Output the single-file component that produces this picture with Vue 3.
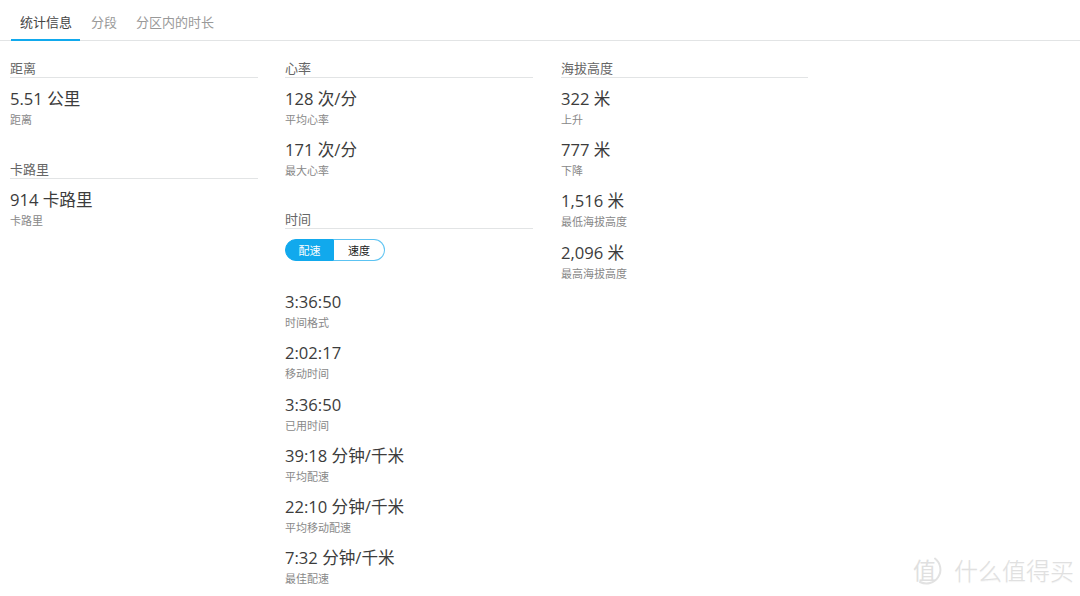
<template>
  <div class="page">
    <div class="tabs">
      <span
        v-for="(tab, i) in tabs"
        :key="tab"
        class="tab"
        :class="{ active: i === 0 }"
      >{{ tab }}</span>
    </div>

    <div class="columns">
      <div v-for="(col, c) in columns" :key="c" class="column">
        <section v-for="group in col" :key="group.title" class="group">
          <h3 class="group-title">{{ group.title }}</h3>
          <div v-if="group.toggle" class="toggle">
            <span class="toggle-item on">配速</span>
            <span class="toggle-item">速度</span>
          </div>
          <div v-for="item in group.items" :key="item.label" class="stat">
            <div class="stat-value">{{ item.value }}</div>
            <div class="stat-label">{{ item.label }}</div>
          </div>
        </section>
      </div>
    </div>

    <div class="watermark">
      <svg class="mark" width="32" height="32" viewBox="0 0 32 32" fill="none">
        <path
          d="M22 3.5A14 14 0 0 1 7 27"
          stroke="#e2e2e2"
          stroke-width="2"
          stroke-linecap="round"
        />
        <text x="0" y="24" class="mark-glyph">值</text>
      </svg>
      <span class="mark-text">什么值得买</span>
    </div>
  </div>
</template>

<script setup>
const tabs = ['统计信息', '分段', '分区内的时长']

const columns = [
  [
    { title: '距离', items: [{ value: '5.51 公里', label: '距离' }] },
    { title: '卡路里', items: [{ value: '914 卡路里', label: '卡路里' }] },
  ],
  [
    {
      title: '心率',
      items: [
        { value: '128 次/分', label: '平均心率' },
        { value: '171 次/分', label: '最大心率' },
      ],
    },
    {
      title: '时间',
      toggle: true,
      items: [
        { value: '3:36:50', label: '时间格式' },
        { value: '2:02:17', label: '移动时间' },
        { value: '3:36:50', label: '已用时间' },
        { value: '39:18 分钟/千米', label: '平均配速' },
        { value: '22:10 分钟/千米', label: '平均移动配速' },
        { value: '7:32 分钟/千米', label: '最佳配速' },
      ],
    },
  ],
  [
    {
      title: '海拔高度',
      items: [
        { value: '322 米', label: '上升' },
        { value: '777 米', label: '下降' },
        { value: '1,516 米', label: '最低海拔高度' },
        { value: '2,096 米', label: '最高海拔高度' },
      ],
    },
  ],
]
</script>

<style>
html,
body {
  margin: 0;
  background: #fff;
  overflow: hidden;
}
</style>

<style scoped>
.page {
  position: relative;
  width: 1080px;
  height: 596px;
  overflow: hidden;
  font-family: "Open Sans", "Noto Sans CJK SC", sans-serif;
  color: #333;
}

/* tabs */
.tabs {
  display: flex;
  height: 41px;
  box-sizing: border-box;
  padding-left: 11px;
  border-bottom: 1px solid #e2e4e5;
}
.tab {
  height: 41px;
  box-sizing: border-box;
  padding: 14px 8px 0 9px;
  margin-right: 2px;
  font-size: 13px;
  line-height: 17px;
  color: #999;
}
.tab.active {
  color: #444;
  border-bottom: 2px solid #11a9ed;
}

/* columns */
.columns {
  display: flex;
  gap: 27px;
  padding: 18px 0 0 10px;
}
.column {
  width: 248px;
}
.column:nth-child(3) {
  width: 247px;
  margin-left: 1px;
}
.group {
  margin-bottom: 21.8px;
}
.column:first-child .group {
  margin-bottom: 22.6px;
}
.group-title {
  margin: 0 0 8px;
  height: 18px;
  font-size: 13px;
  line-height: 18px;
  font-weight: 400;
  color: #666;
  border-bottom: 1px solid #e2e4e5;
}

.stat {
  height: 51.2px;
}
.stat-value {
  font-size: 16.6px;
  line-height: 26px;
  color: #3c3c3c;
}
.stat-label {
  font-size: 11px;
  line-height: 16px;
  color: #888;
}

/* 配速 / 速度 */
.toggle {
  display: flex;
  width: 100px;
  height: 22px;
  margin: 10px 0 28px;
}
.toggle-item {
  flex: 1;
  display: flex;
  align-items: center;
  justify-content: center;
  font-size: 11px;
  color: #222;
  border: 1px solid #5cc3f2;
  border-left: 0;
  border-radius: 0 11px 11px 0;
}
.toggle-item.on {
  flex: 0 0 49px;
  box-sizing: border-box;
  color: #fff;
  background: #11a9ed;
  border: 1px solid #11a9ed;
  border-radius: 11px 0 0 11px;
}

.watermark {
  position: absolute;
  left: 913px;
  top: 555px;
  display: flex;
  align-items: center;
  gap: 9px;
}
.mark-glyph {
  font-size: 23px;
  fill: #e0e0e0;
}
.mark-text {
  font-size: 24px;
  line-height: 32px;
  font-weight: 300;
  color: #e0e0e0;
  text-shadow: 0 1px 1px rgba(0, 0, 0, 0.05);
}
</style>
